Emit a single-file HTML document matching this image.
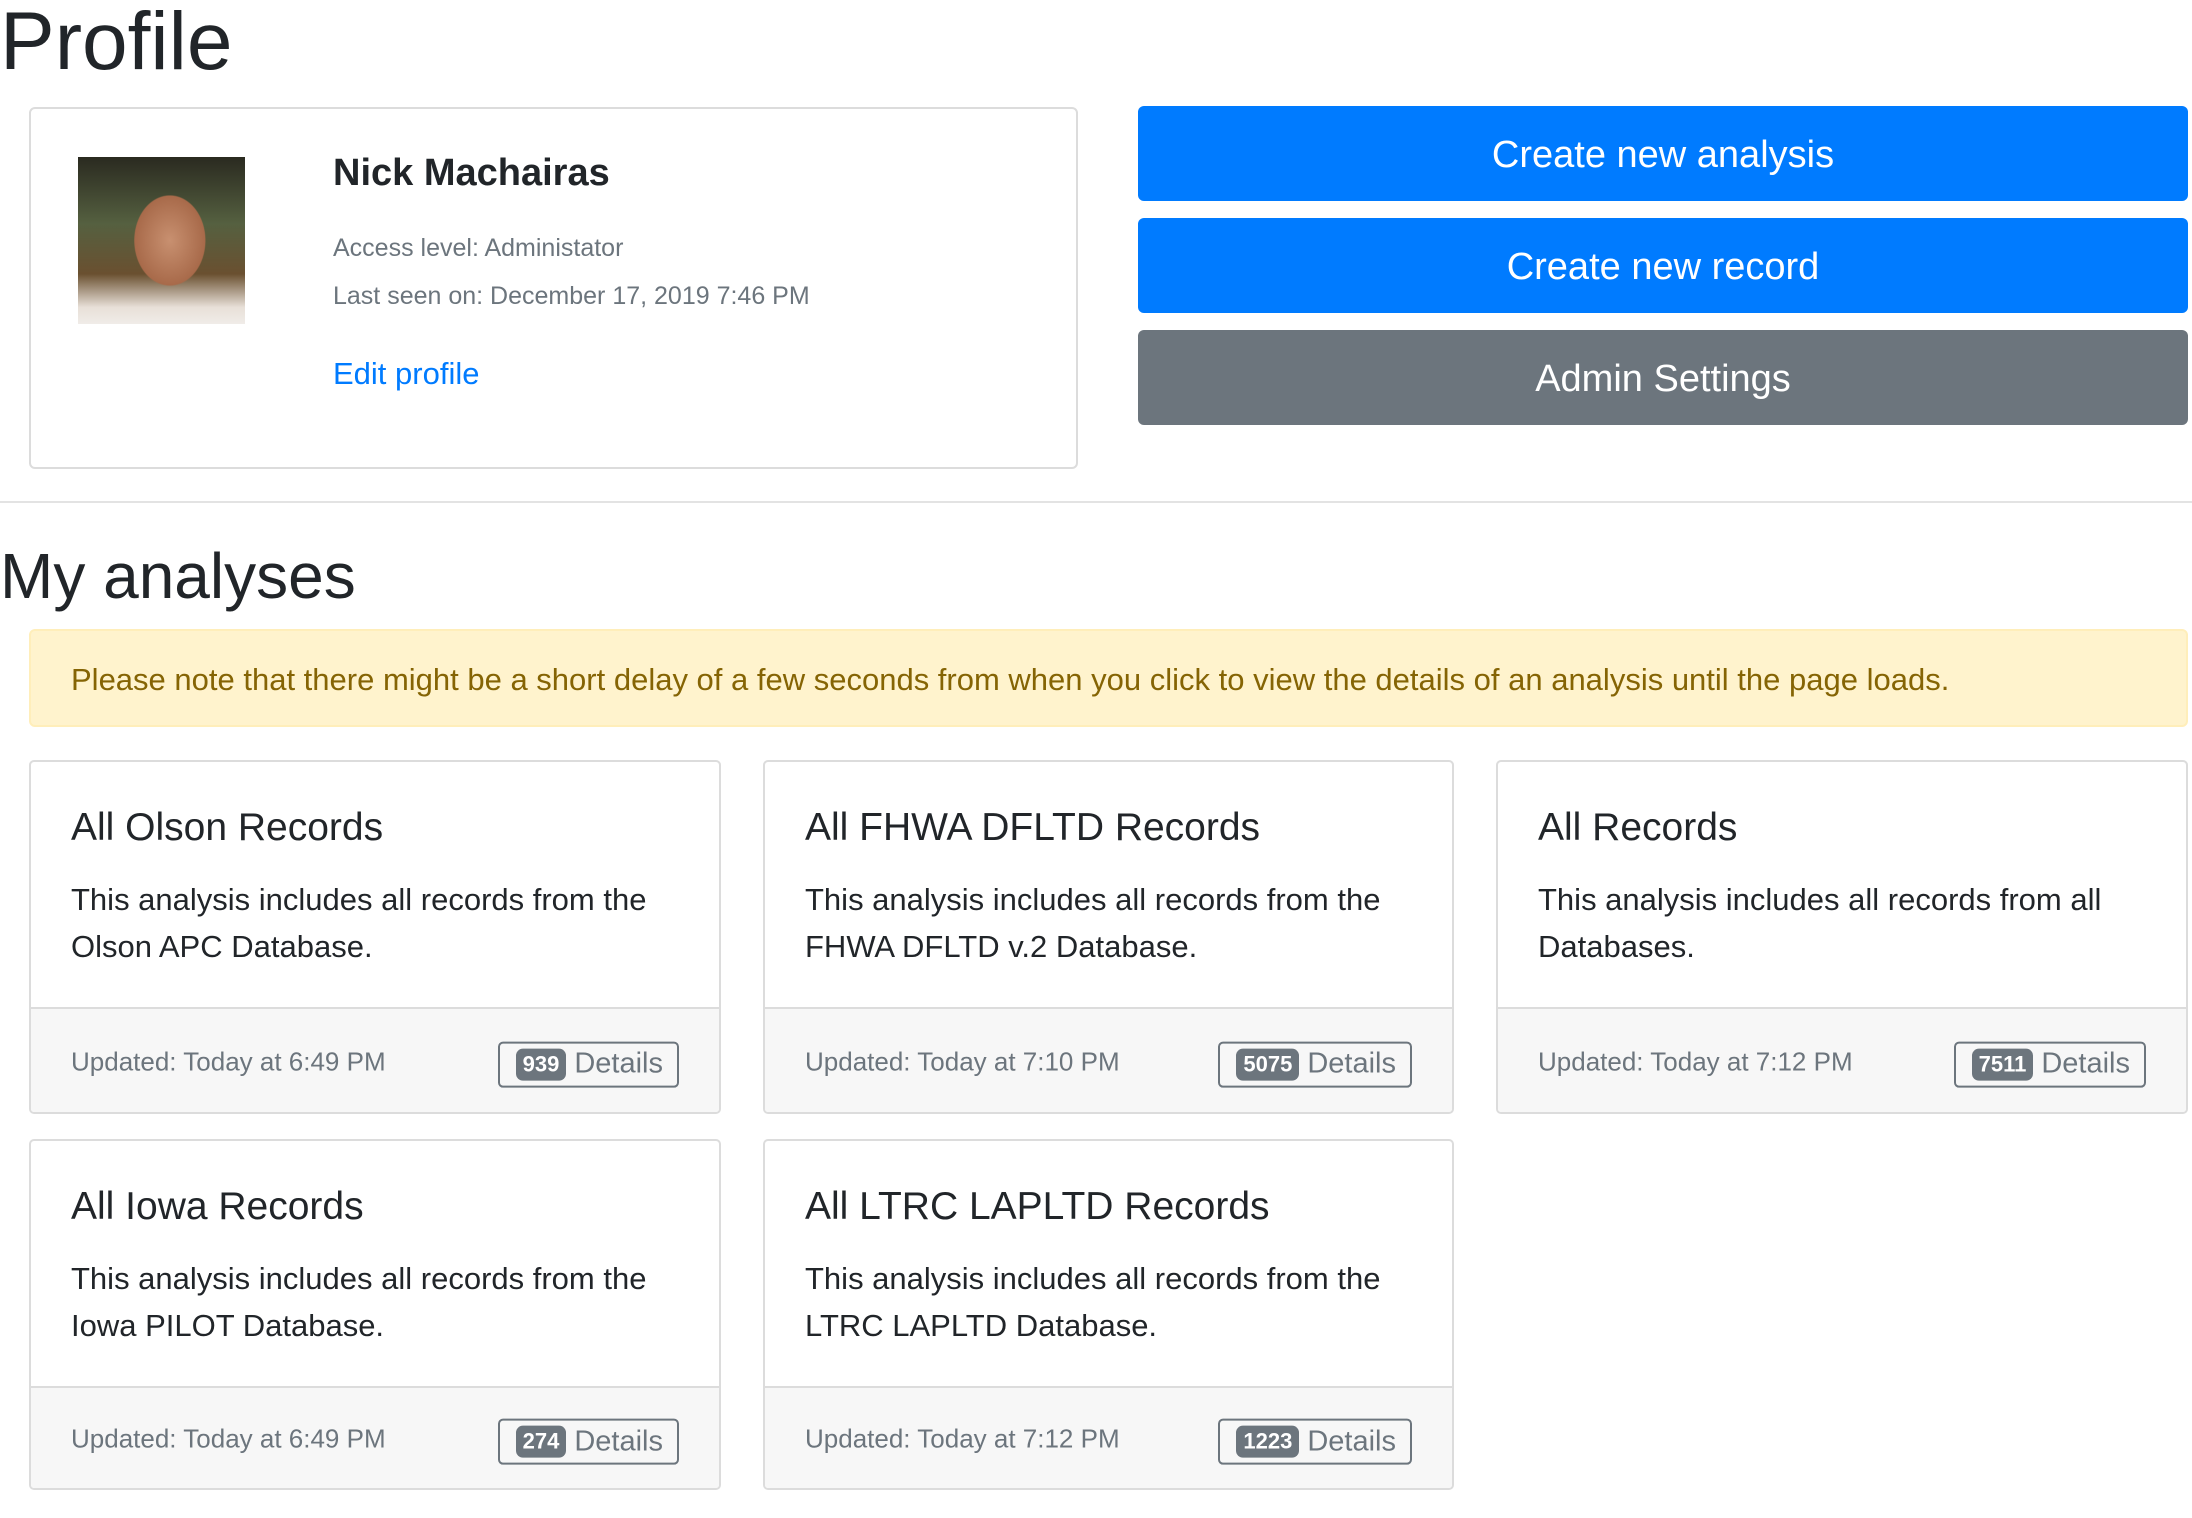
<!DOCTYPE html>
<html><head><meta charset="utf-8"><style>
*{box-sizing:border-box;margin:0;padding:0}
body{width:2192px;height:1518px;background:#fff;font-family:"Liberation Sans",Arial,sans-serif;color:#212529;position:relative;overflow:hidden}
.a{position:absolute}
.card{position:absolute;border:2px solid #dcdcdc;border-radius:5px;background:#fff;overflow:hidden}
.foot{position:absolute;left:0;right:0;bottom:0;background:#f7f7f7;border-top:2px solid #dcdcdc}
.ct{position:absolute;left:40px;top:44px;font-size:39px;font-weight:500;white-space:nowrap}
.cb{position:absolute;left:40px;top:114px;font-size:31px;line-height:47px;white-space:nowrap}
.ft{position:absolute;left:40px;top:50%;transform:translateY(-46%);font-size:26px;color:#6c757d;white-space:nowrap}
.btn{position:absolute;right:40px;top:50%;transform:translateY(-42%);height:46px;border:2px solid #6c757d;border-radius:5px;padding:0 14px 0 16px;display:flex;align-items:center;font-size:29px;color:#6c757d;white-space:nowrap}
.bd{background:#6c757d;color:#fff;font-size:22px;font-weight:bold;border-radius:7px;padding:3px 7px;margin-right:8px}
.big{position:absolute;left:1138px;width:1050px;height:95px;border-radius:6px;color:#fff;font-size:38px;display:flex;align-items:center;justify-content:center;padding-top:3px}
</style></head><body>
<div class="a" style="left:0;top:-6px;font-size:82px;font-weight:500;line-height:96px">Profile</div>
<div class="card" style="left:29px;top:107px;width:1049px;height:362px;border-radius:6px">
<div class="a" style="left:47px;top:48px;width:167px;height:167px;background:radial-gradient(ellipse 30% 38% at 55% 50%,#c89070 0%,#a86a4a 70%,transparent 72%),linear-gradient(180deg,#2a2a20 0%,#556040 40%,#6a5030 70%,#e8e0d8 90%,#f0ece8 100%)"></div>
<div class="a" style="left:302px;top:43px;font-size:38px;font-weight:bold">Nick Machairas</div>
<div class="a" style="left:302px;top:125px;font-size:25px;color:#6c757d">Access level: Administator</div>
<div class="a" style="left:302px;top:173px;font-size:25px;color:#6c757d">Last seen on: December 17, 2019 7:46 PM</div>
<div class="a" style="left:302px;top:247px;font-size:31px;color:#007bff">Edit profile</div>
</div>
<div class="big" style="top:106px;background:#007bff">Create new analysis</div>
<div class="big" style="top:218px;background:#007bff">Create new record</div>
<div class="big" style="top:330px;background:#6c757d">Admin Settings</div>
<div class="a" style="left:0;top:501px;width:2192px;height:2px;background:#e3e3e3"></div>
<div class="a" style="left:0;top:536px;font-size:64px;font-weight:500;line-height:80px">My analyses</div>
<div class="a" style="left:29px;top:629px;width:2159px;height:98px;background:#fff3cd;border:2px solid #ffeeba;border-radius:6px;color:#856404;font-size:31px;padding-left:40px;padding-top:3px;display:flex;align-items:center;white-space:nowrap">Please note that there might be a short delay of a few seconds from when you click to view the details of an analysis until the page loads.</div>

<div class="card" style="left:29px;top:760px;width:692px;height:354px"><div class="ct">All Olson Records</div><div class="cb">This analysis includes all records from the<br>Olson APC Database.</div><div class="foot" style="height:105px"><div class="ft">Updated: Today at 6:49 PM</div><div class="btn"><span class="bd">939</span>Details</div></div></div>
<div class="card" style="left:763px;top:760px;width:691px;height:354px"><div class="ct">All FHWA DFLTD Records</div><div class="cb">This analysis includes all records from the<br>FHWA DFLTD v.2 Database.</div><div class="foot" style="height:105px"><div class="ft">Updated: Today at 7:10 PM</div><div class="btn"><span class="bd">5075</span>Details</div></div></div>
<div class="card" style="left:1496px;top:760px;width:692px;height:354px"><div class="ct">All Records</div><div class="cb">This analysis includes all records from all<br>Databases.</div><div class="foot" style="height:105px"><div class="ft">Updated: Today at 7:12 PM</div><div class="btn"><span class="bd">7511</span>Details</div></div></div>
<div class="card" style="left:29px;top:1139px;width:692px;height:351px"><div class="ct">All Iowa Records</div><div class="cb">This analysis includes all records from the<br>Iowa PILOT Database.</div><div class="foot" style="height:102px"><div class="ft">Updated: Today at 6:49 PM</div><div class="btn"><span class="bd">274</span>Details</div></div></div>
<div class="card" style="left:763px;top:1139px;width:691px;height:351px"><div class="ct">All LTRC LAPLTD Records</div><div class="cb">This analysis includes all records from the<br>LTRC LAPLTD Database.</div><div class="foot" style="height:102px"><div class="ft">Updated: Today at 7:12 PM</div><div class="btn"><span class="bd">1223</span>Details</div></div></div>
</body></html>
